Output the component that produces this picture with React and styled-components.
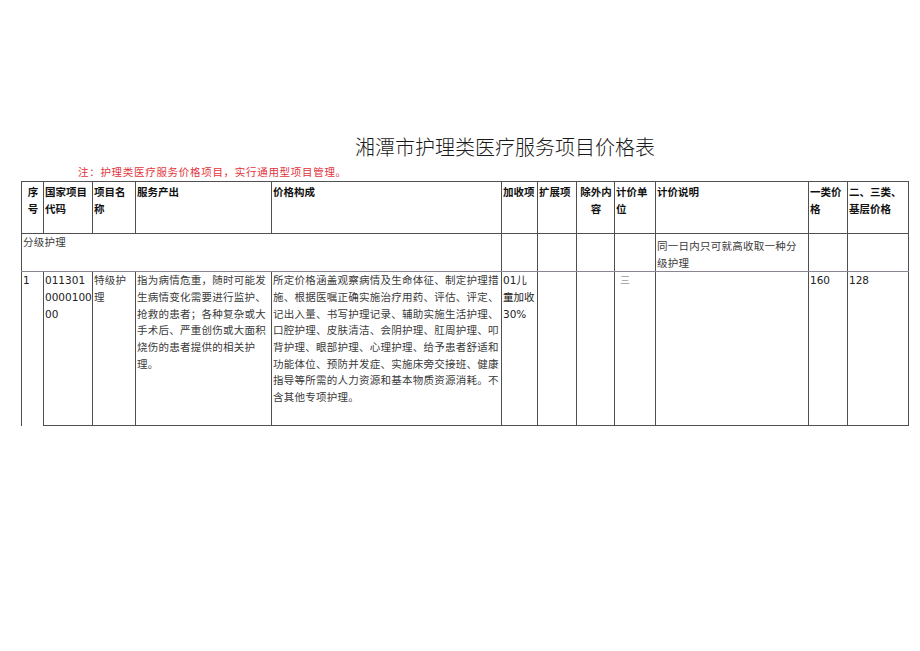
import React from 'react'
import styled, { createGlobalStyle } from 'styled-components'

const GlobalStyle = createGlobalStyle`
  body {
    margin: 0;
    background: #ffffff;
    font-family: "Noto Sans CJK SC", "DejaVu Sans", sans-serif;
  }
`

// Styles //
const Page = styled.div`
  width: 920px;
  height: 651px;
  padding-top: 134px;
  box-sizing: border-box;
  overflow: hidden;
`

const Title = styled.h1`
  margin: 0;
  padding-left: 90px;
  text-align: center;
  font-size: 20px;
  line-height: 26px;
  font-weight: 300;
  color: #1a1a1a;
`

const Note = styled.div`
  margin: 5px 0 0 78px;
  font-size: 10.5px;
  line-height: 14px;
  letter-spacing: 0.7px;
  color: #e2343c;
`

const Table = styled.table`
  margin: 2px 0 0 21px;
  width: 887px;
  table-layout: fixed;
  border-collapse: collapse;
`

const Row = styled.tr`
  height: ${p => p.$h}px;
`

const HeadCell = styled.th`
  border: 1px solid #505050;
  padding: 1px 0 0 1px;
  vertical-align: top;
  text-align: ${p => (p.$center ? 'center' : 'left')};
  font-size: 10.5px;
  line-height: 17px;
  font-weight: 700;
  color: #111;
  word-break: break-all;
`

const Cell = styled.td`
  border: 1px solid #505050;
  border-bottom-color: ${p => p.$soft ? '#8c8490' : '#505050'};
  ${p => p.$open && 'border-bottom: none;'}
  padding: ${p => p.$pt || 0}px 1px 0 1px;
  vertical-align: top;
  text-align: left;
  font-size: 10.5px;
  line-height: 16.67px;
  letter-spacing: 0.25px;
  color: #3a3a3a;
  font-family: ${p => p.$num ? '"DejaVu Sans", "Noto Sans CJK SC", sans-serif' : '"Noto Sans CJK SC", sans-serif'};
  ${p => p.$num && 'letter-spacing: 0; color: #222;'}
`

const Faint = styled.span`
  color: #9a9a9a;
  font-size: 10px;
  padding-left: 4px;
`

const widths = [22, 49, 43, 136, 230, 36, 39, 38, 41, 153, 39, 61]

export default function App() {
  return (
    <Page>
      <GlobalStyle />
      <Title>湘潭市护理类医疗服务项目价格表</Title>
      <Note>注：护理类医疗服务价格项目，实行通用型项目管理。</Note>
      <Table>
        <colgroup>
          {widths.map((w, i) => <col key={i} style={{ width: w }} />)}
        </colgroup>
        <tbody>
          <Row $h={52}>
            <HeadCell $center>序号</HeadCell>
            <HeadCell>国家项目代码</HeadCell>
            <HeadCell>项目名称</HeadCell>
            <HeadCell>服务产出</HeadCell>
            <HeadCell>价格构成</HeadCell>
            <HeadCell>加收项</HeadCell>
            <HeadCell>扩展项</HeadCell>
            <HeadCell $center>除外内容</HeadCell>
            <HeadCell>计价单位</HeadCell>
            <HeadCell>计价说明</HeadCell>
            <HeadCell>一类价格</HeadCell>
            <HeadCell>二、三类、基层价格</HeadCell>
          </Row>
          <Row $h={35}>
            <Cell colSpan={5} $soft>分级护理</Cell>
            <Cell $soft />
            <Cell $soft />
            <Cell $soft />
            <Cell $soft />
            <Cell $soft $pt={4}>同一日内只可就高收取一种分级护理</Cell>
            <Cell $soft />
            <Cell $soft />
          </Row>
          <Row $h={154}>
            <Cell $num $open>1</Cell>
            <Cell $num>011301<br />0000100<br />00</Cell>
            <Cell>特级护理</Cell>
            <Cell>指为病情危重，随时可能发生病情变化需要进行监护、抢救的患者；各种复杂或大手术后、严重创伤或大面积烧伤的患者提供的相关护理。</Cell>
            <Cell>所定价格涵盖观察病情及生命体征、制定护理措施、根据医嘱正确实施治疗用药、评估、评定、记出入量、书写护理记录、辅助实施生活护理、口腔护理、皮肤清洁、会阴护理、肛周护理、叩背护理、眼部护理、心理护理、给予患者舒适和功能体位、预防并发症、实施床旁交接班、健康指导等所需的人力资源和基本物质资源消耗。不含其他专项护理。</Cell>
            <Cell $num>01儿童加收30%</Cell>
            <Cell />
            <Cell />
            <Cell><Faint>三</Faint></Cell>
            <Cell />
            <Cell $num>160</Cell>
            <Cell $num>128</Cell>
          </Row>
        </tbody>
      </Table>
    </Page>
  )
}
